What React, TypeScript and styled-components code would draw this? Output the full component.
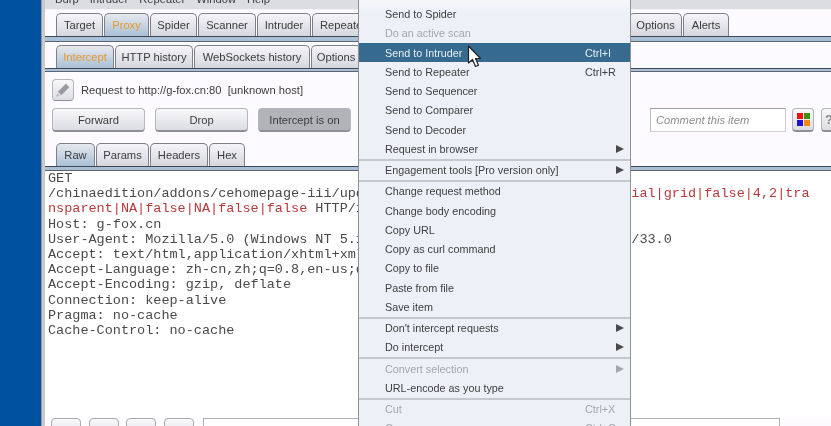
import React from "react";
import styled, { createGlobalStyle } from "styled-components";

const GlobalStyle = createGlobalStyle`
  html, body {
    margin: 0;
    padding: 0;
    background: #00519f;
    overflow: hidden;
  }
`;

const Page = styled.div`
  position: relative;
  display: flex;
  width: 831px;
  height: 426px;
  overflow: hidden;
  font-family: "Liberation Sans", Arial, sans-serif;
  font-size: 11.2px;
  color: #3c3c3c;
  filter: blur(0.45px);
`;

const Desktop = styled.div`
  width: 41px;
  flex: none;
  background: #00519f;
`;

const Frame = styled.div`
  width: 4px;
  flex: none;
  background: #c9c9cc;
  border-left: 1px solid #9a9a9e;
  box-sizing: border-box;
`;

const Main = styled.div`
  flex: 1;
  min-width: 0;
  display: flex;
  flex-direction: column;
  background: #fdfbff;
`;

const MenuBar = styled.div`
  height: 9px;
  flex: none;
  display: flex;
  align-items: flex-end;
  gap: 11px;
  padding-left: 10px;
  overflow: hidden;
  background: #dcdde3;
  border-bottom: 1px solid #f4f4f6;
  line-height: 13px;
`;

const MenuBarLabel = styled.span`
  flex: none;
  transform: translateY(-3px);
`;

const TabRow = styled.div<{ $top: number }>`
  display: flex;
  align-items: flex-end;
  gap: 1px;
  height: 23px;
  padding: ${({ $top }) => $top}px 0 0 11px;
`;

const Tab = styled.div<{ $w: number; $selected?: boolean; $orange?: boolean }>`
  width: ${({ $w }) => $w}px;
  height: 23px;
  flex: none;
  box-sizing: border-box;
  display: flex;
  align-items: center;
  justify-content: center;
  font-size: 11.2px;
  border: 1px solid #7d8088;
  border-bottom: none;
  border-radius: 5px 5px 0 0;
  color: ${({ $orange }) => ($orange ? "#e69a2e" : "#3c3c3c")};
  background: ${({ $selected }) =>
    $selected
      ? "linear-gradient(#e6e9ef, #a9c0d6)"
      : "linear-gradient(#f5f5f8, #d6d7de)"};
`;

const TabBand = styled.div<{ $h: number }>`
  height: ${({ $h }) => $h}px;
  flex: none;
  box-sizing: border-box;
  background: #a9c0d6;
  border-top: 1px solid #3f4654;
  border-bottom: 1px solid #5c6472;
`;

const RequestRow = styled.div`
  display: flex;
  align-items: center;
  gap: 7px;
  height: 22px;
  margin: 7px 0 0 7px;
`;

const IconButton = styled.div`
  width: 22px;
  height: 22px;
  flex: none;
  box-sizing: border-box;
  display: flex;
  align-items: center;
  justify-content: center;
  border: 1px solid #b4b6bc;
  border-bottom-color: #8e9096;
  border-radius: 4px;
  background: linear-gradient(#f8f8fa, #dcdde2);
`;

const ActionRow = styled.div`
  display: flex;
  align-items: center;
  height: 24px;
  margin: 7px 0 0 7px;
`;

const ActionButton = styled.div<{ $on?: boolean }>`
  width: 93px;
  height: 24px;
  margin-right: 10px;
  flex: none;
  box-sizing: border-box;
  display: flex;
  align-items: center;
  justify-content: center;
  font-size: 11.2px;
  border: 1px solid #b4b6bc;
  border-bottom: 2px solid #8e9096;
  border-radius: 4px;
  background: ${({ $on }) =>
    $on ? "#b1b3b8" : "linear-gradient(#f8f8fa, #dcdde2)"};
`;

const CommentBox = styled.div`
  width: 136px;
  height: 24px;
  margin-left: 289px;
  flex: none;
  box-sizing: border-box;
  display: flex;
  align-items: center;
  padding-left: 5px;
  font-style: italic;
  color: #8c8c8c;
  background: #fff;
  border: 1px solid #cfcfd2;
  border-top-color: #a0a0a3;
  border-left-color: #bdbdc0;
`;

const SmallButton = styled(IconButton)`
  height: 24px;
  margin-left: 6px;
  border-bottom-width: 2px;
`;

const HelpButton = styled(SmallButton)`
  width: 16px;
  margin-left: 7px;
  font-size: 13px;
  font-weight: bold;
  color: #8a8a8a;
`;

const Swatches = styled.div`
  display: grid;
  grid-template-columns: 6px 6px;
  grid-auto-rows: 6px;
  gap: 1px;
`;

const Swatch = styled.div<{ $c: string }>`
  background: ${({ $c }) => $c};
`;

const Editor = styled.div`
  flex: 1;
  min-height: 0;
  padding: 0 0 0 3px;
  background: #fff;
  font-family: "Liberation Mono", "Courier New", monospace;
  font-size: 13.5px;
  line-height: 15.2px;
  color: #4a4a4a;
  white-space: pre;
`;

const Param = styled.span`
  color: #b83a3a;
`;

const SearchRow = styled.div`
  display: flex;
  gap: 7.5px;
  height: 8px;
  flex: none;
  padding-left: 6px;
  background: #fdfbff;
  overflow: hidden;
`;

const SearchButton = styled.div`
  width: 30px;
  height: 24px;
  flex: none;
  box-sizing: border-box;
  border: 1px solid #a8aab0;
  border-radius: 4px;
  background: linear-gradient(#f8f8fa, #dcdde2);
`;

const SearchInput = styled.div`
  width: 577px;
  height: 24px;
  flex: none;
  margin-left: 2px;
  box-sizing: border-box;
  background: #fff;
  border: 1px solid #b0b0b3;
`;

const ContextMenu = styled.div`
  position: absolute;
  left: 358px;
  top: 0;
  width: 273px;
  box-sizing: border-box;
  padding: 4.5px 0 40px;
  font-size: 10.8px;
  background: linear-gradient(#f6f7fb, #eef0f8 12px);
  border: 1px solid #8f9196;
  border-top: none;
`;

const MenuItem = styled.div<{ $disabled?: boolean; $hover?: boolean }>`
  height: 19.25px;
  display: flex;
  align-items: center;
  padding: 0 14px 0 26px;
  color: ${({ $disabled, $hover }) =>
    $hover ? "#e6edf3" : $disabled ? "#a5a6ab" : "#404040"};
  background: ${({ $hover }) => ($hover ? "#376a8f" : "transparent")};
`;

const Shortcut = styled.span`
  margin-left: auto;
  width: 30px;
  margin-right: 1px;
`;

const Arrow = styled.span<{ $disabled?: boolean }>`
  margin-left: auto;
  margin-right: -8px;
  width: 0;
  height: 0;
  border-left: 8px solid ${({ $disabled }) => ($disabled ? "#a5a6ab" : "#4a4a4a")};
  border-top: 4.5px solid transparent;
  border-bottom: 4.5px solid transparent;
`;

const Separator = styled.div`
  height: 2px;
  background: #c6c8ce;
`;

const Cursor = styled.svg`
  position: absolute;
  left: 467px;
  top: 45px;
`;

type Item = {
  label: string;
  shortcut?: string;
  sub?: boolean;
  disabled?: boolean;
  hover?: boolean;
};

const menuGroups: Item[][] = [
  [
    { label: "Send to Spider" },
    { label: "Do an active scan", disabled: true },
    { label: "Send to Intruder", shortcut: "Ctrl+I", hover: true },
    { label: "Send to Repeater", shortcut: "Ctrl+R" },
    { label: "Send to Sequencer" },
    { label: "Send to Comparer" },
    { label: "Send to Decoder" },
    { label: "Request in browser", sub: true },
  ],
  [{ label: "Engagement tools [Pro version only]", sub: true }],
  [
    { label: "Change request method" },
    { label: "Change body encoding" },
    { label: "Copy URL" },
    { label: "Copy as curl command" },
    { label: "Copy to file" },
    { label: "Paste from file" },
    { label: "Save item" },
  ],
  [
    { label: "Don't intercept requests", sub: true },
    { label: "Do intercept", sub: true },
  ],
  [
    { label: "Convert selection", sub: true, disabled: true },
    { label: "URL-encode as you type" },
  ],
  [
    { label: "Cut", shortcut: "Ctrl+X", disabled: true },
    { label: "Copy", shortcut: "Ctrl+C", disabled: true },
  ],
];

const mainTabs: [string, number][] = [
  ["Target", 47],
  ["Proxy", 45],
  ["Spider", 47],
  ["Scanner", 58],
  ["Intruder", 54],
  ["Repeater", 62],
  ["Sequencer", 70],
  ["Decoder", 60],
  ["Comparer", 62],
  ["Extender", 58],
  ["Options", 53],
  ["Alerts", 46],
];

const App = () => {
  return (
    <>
      <GlobalStyle />
      <Page>
        <Desktop />
        <Frame />
        <Main>
          <MenuBar>
            {["Burp", "Intruder", "Repeater", "Window", "Help"].map((m) => (
              <MenuBarLabel key={m}>{m}</MenuBarLabel>
            ))}
          </MenuBar>
          <TabRow $top={3}>
            {mainTabs.map(([name, w]) => (
              <Tab key={name} $w={w} $selected={name === "Proxy"} $orange={name === "Proxy"}>
                {name}
              </Tab>
            ))}
          </TabRow>
          <TabBand $h={6} />
          <TabRow $top={3}>
            <Tab $w={58} $selected $orange>Intercept</Tab>
            <Tab $w={78}>HTTP history</Tab>
            <Tab $w={116}>WebSockets history</Tab>
            <Tab $w={50}>Options</Tab>
          </TabRow>
          <TabBand $h={4} />
          <RequestRow>
            <IconButton>
              <svg width="16" height="16" viewBox="0 0 14 14">
                <path d="M9.500 1.500l3 3-7 7-3-3z" fill="#9a9a9c" />
                <path d="M1 13l1-3 2 2z" fill="#b5b5b7" />
              </svg>
            </IconButton>
            <span>Request to http://g-fox.cn:80&nbsp; [unknown host]</span>
          </RequestRow>
          <ActionRow>
            <ActionButton>Forward</ActionButton>
            <ActionButton>Drop</ActionButton>
            <ActionButton $on>Intercept is on</ActionButton>
            <CommentBox>Comment this item</CommentBox>
            <SmallButton>
              <Swatches>
                <Swatch $c="#f01010" />
                <Swatch $c="#3f8f10" />
                <Swatch $c="#2010d0" />
                <Swatch $c="#f58a10" />
              </Swatches>
            </SmallButton>
            <HelpButton>?</HelpButton>
          </ActionRow>
          <TabRow $top={11}>
            <Tab $w={39} $selected>Raw</Tab>
            <Tab $w={53}>Params</Tab>
            <Tab $w={58}>Headers</Tab>
            <Tab $w={36}>Hex</Tab>
          </TabRow>
          <TabBand $h={5} />
          <Editor>
            {"GET\n/chinaedition/addons/cehomepage-iii/updates/thumb.php?q="}
            <Param>{"map|NA|true|special|grid|false|4,2|tra\nnsparent|NA|false|NA|false|false"}</Param>
            {` HTTP/1.1
Host: g-fox.cn
User-Agent: Mozilla/5.0 (Windows NT 5.1; rv:33.0) Gecko/20100101 Firefox/33.0
Accept: text/html,application/xhtml+xml,application/xml;q=0.9,*/*;q=0.8
Accept-Language: zh-cn,zh;q=0.8,en-us;q=0.5,en;q=0.3
Accept-Encoding: gzip, deflate
Connection: keep-alive
Pragma: no-cache
Cache-Control: no-cache`}
          </Editor>
          <SearchRow>
            <SearchButton />
            <SearchButton />
            <SearchButton />
            <SearchButton />
            <SearchInput />
          </SearchRow>
        </Main>
        <ContextMenu>
          {menuGroups.map((group, i) => (
            <React.Fragment key={i}>
              {i > 0 && <Separator />}
              {group.map((item) => (
                <MenuItem key={item.label} $disabled={item.disabled} $hover={item.hover}>
                  {item.label}
                  {item.shortcut && <Shortcut>{item.shortcut}</Shortcut>}
                  {item.sub && <Arrow $disabled={item.disabled} />}
                </MenuItem>
              ))}
            </React.Fragment>
          ))}
        </ContextMenu>
        <Cursor width="14" height="24" viewBox="0 0 14 24">
          <path
            d="M1.500 1v17l4-3.500 3 7 3-1.300-3-6.700h5z"
            fill="#fff"
            stroke="#222"
            strokeWidth="1.2"
            strokeLinejoin="round"
          />
        </Cursor>
      </Page>
    </>
  );
};

export default App;
